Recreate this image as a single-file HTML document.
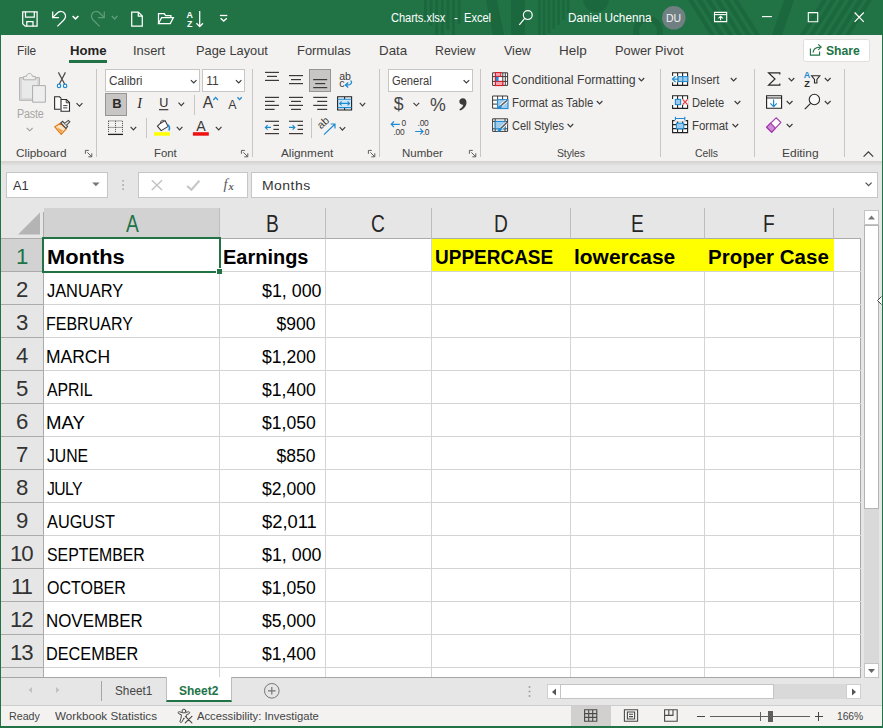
<!DOCTYPE html>
<html lang="en">
<head>
<meta charset="utf-8">
<title>Charts.xlsx - Excel</title>
<style>
html,body{margin:0;padding:0;background:#e6e6e6;}
body{width:883px;height:728px;overflow:hidden;font-family:"Liberation Sans",sans-serif;}
#app{position:relative;width:883px;height:728px;overflow:hidden;background:#e6e6e6;}
.a{position:absolute;box-sizing:border-box;}
.t{position:absolute;white-space:pre;transform-origin:0 50%;line-height:24px;height:24px;font-family:"Liberation Sans",sans-serif;}
svg{position:absolute;overflow:visible;}
.sep{position:absolute;width:1px;background:#c8c6c4;}
.box{position:absolute;box-sizing:border-box;background:#fff;border:1px solid #c8c6c4;}
.gv{position:absolute;width:1px;background:#d4d4d4;top:239px;height:438px;}
.gh{position:absolute;height:1px;background:#d4d4d4;left:44px;width:817px;}
.hv{position:absolute;width:1px;background:#bdbdbd;top:208px;height:31px;}
.rh{position:absolute;height:1px;background:#ababab;left:1px;width:42px;}
</style>
</head>
<body>
<div id="app">
<!-- title bar -->
<div class="a" style="left:0;top:0;width:883px;height:35px;background:#217346;"></div>
<svg style="left:0;top:0;" width="883" height="35" viewBox="0 0 883 35"><g fill="#1c683e"><rect x="424" y="0" width="3" height="20"/><rect x="429.6" y="0" width="3" height="26"/><rect x="435.20000000000005" y="0" width="3" height="35"/><rect x="440.80000000000007" y="0" width="3" height="35"/><rect x="446.4000000000001" y="0" width="3" height="30"/><rect x="452.0000000000001" y="0" width="3" height="35"/><rect x="457.60000000000014" y="0" width="3" height="24"/><path d="M486 0H497L504 35H493Z"/><rect x="511" y="0" width="14" height="35"/><rect x="538.0" y="0" width="2.6" height="35"/><rect x="542.8" y="0" width="2.6" height="35"/><rect x="547.6" y="0" width="2.6" height="33"/><rect x="552.4" y="0" width="2.6" height="29"/><rect x="557.2" y="0" width="2.6" height="25"/><rect x="562.0" y="0" width="2.6" height="20"/><rect x="566.8" y="0" width="2.6" height="14"/><circle cx="596" cy="-1" r="13"/><circle cx="648" cy="31" r="12" fill="none" stroke="#1c683e" stroke-width="6"/><path d="M688 0H693L715 35H710Z"/><path d="M697 0H702L724 35H719Z"/><path d="M706 0H711L733 35H728Z"/><path d="M715 0H720L742 35H737Z"/><path d="M724 0H729L751 35H746Z"/><path d="M733 0H738L760 35H755Z"/><path d="M784 0H794L782 35H772Z"/><path d="M822 0H827L805 35H800Z"/><path d="M831 0H836L814 35H809Z"/><path d="M840 0H845L823 35H818Z"/><path d="M849 0H854L832 35H827Z"/><path d="M858 0H863L841 35H836Z"/><path d="M867 0H872L850 35H845Z"/></g></svg>
<!-- ribbon -->
<div class="a" style="left:0;top:35px;width:883px;height:126px;background:#f3f2f1;"></div>
<div class="a" style="left:0;top:161px;width:883px;height:5px;background:linear-gradient(#d2d1d0,#e6e6e6);"></div>
<!-- home underline -->
<div class="a" style="left:69px;top:60px;width:38px;height:3px;background:#217346;"></div>
<!-- share button -->
<div class="a" style="left:803px;top:38.5px;width:66.5px;height:23px;background:#fff;border:1px solid #e1dfdd;border-radius:2.5px;"></div>
<!-- ribbon group separators -->
<div class="sep" style="left:96px;top:69px;height:88px;"></div>
<div class="sep" style="left:252px;top:69px;height:88px;"></div>
<div class="sep" style="left:379px;top:69px;height:88px;"></div>
<div class="sep" style="left:480px;top:69px;height:88px;"></div>
<div class="sep" style="left:660px;top:69px;height:88px;"></div>
<div class="sep" style="left:754px;top:69px;height:88px;"></div>
<div class="sep" style="left:844px;top:69px;height:88px;"></div>
<!-- small separators -->
<div class="sep" style="left:194px;top:95px;height:20px;"></div>
<div class="sep" style="left:146px;top:118px;height:20px;"></div>
<div class="sep" style="left:311px;top:118px;height:20px;"></div>
<!-- combo boxes -->
<div class="box" style="left:105px;top:69px;width:95px;height:23px;"></div>
<div class="box" style="left:202px;top:69px;width:43px;height:23px;"></div>
<div class="box" style="left:388px;top:69px;width:85px;height:23px;"></div>
<!-- pressed buttons -->
<div class="a" style="left:105px;top:93px;width:22px;height:23px;background:#c8c6c4;border:1px solid #979593;"></div>
<div class="a" style="left:309px;top:69px;width:22px;height:23px;background:#c8c6c4;border:1px solid #979593;"></div>

<!-- formula bar -->
<div class="box" style="left:6px;top:172px;width:102px;height:26px;border-color:#c6c6c6;"></div>
<div class="box" style="left:138px;top:172px;width:110px;height:26px;border-color:#c6c6c6;"></div>
<div class="box" style="left:251px;top:172px;width:627px;height:26px;border-color:#c6c6c6;"></div>

<!-- grid -->
<div class="a" style="left:1px;top:208px;width:860px;height:31px;background:#e6e6e6;"></div>
<div class="a" style="left:44px;top:239px;width:817px;height:438px;background:#fff;"></div>
<div class="a" style="left:1px;top:239px;width:42px;height:438px;background:#e6e6e6;"></div>
<!-- selected headers -->
<div class="a" style="left:44px;top:208px;width:176px;height:30px;background:#d2d2d2;"></div>
<div class="a" style="left:1px;top:239px;width:42px;height:32px;background:#d2d2d2;"></div>
<!-- yellow cells -->
<div class="a" style="left:432px;top:239px;width:402px;height:32px;background:#ffff00;"></div>
<!-- header borders -->
<div class="a" style="left:1px;top:238px;width:860px;height:1px;background:#ababab;"></div>
<div class="a" style="left:43px;top:212px;width:1px;height:465px;background:#ababab;"></div>
<div class="a" style="left:860px;top:238px;width:1px;height:440px;background:#a6a6a6;"></div>
<div class="hv" style="left:219px;"></div><div class="hv" style="left:325px;"></div><div class="hv" style="left:431px;"></div>
<div class="hv" style="left:570px;"></div><div class="hv" style="left:704px;"></div><div class="hv" style="left:833px;"></div>
<div class="gv" style="left:219px;"></div><div class="gv" style="left:325px;"></div><div class="gv" style="left:431px;"></div>
<div class="gv" style="left:570px;"></div><div class="gv" style="left:704px;"></div><div class="gv" style="left:833px;"></div>
<div class="gh" style="top:271px;"></div><div class="rh" style="top:271px;"></div>
<div class="gh" style="top:304px;"></div><div class="rh" style="top:304px;"></div>
<div class="gh" style="top:337px;"></div><div class="rh" style="top:337px;"></div>
<div class="gh" style="top:370px;"></div><div class="rh" style="top:370px;"></div>
<div class="gh" style="top:403px;"></div><div class="rh" style="top:403px;"></div>
<div class="gh" style="top:436px;"></div><div class="rh" style="top:436px;"></div>
<div class="gh" style="top:469px;"></div><div class="rh" style="top:469px;"></div>
<div class="gh" style="top:502px;"></div><div class="rh" style="top:502px;"></div>
<div class="gh" style="top:535px;"></div><div class="rh" style="top:535px;"></div>
<div class="gh" style="top:568px;"></div><div class="rh" style="top:568px;"></div>
<div class="gh" style="top:601px;"></div><div class="rh" style="top:601px;"></div>
<div class="gh" style="top:634px;"></div><div class="rh" style="top:634px;"></div>
<div class="gh" style="top:667px;"></div><div class="rh" style="top:667px;"></div>
<!-- yellow covers inner vertical gridlines in row 1 -->
<div class="a" style="left:432px;top:239px;width:402px;height:32px;background:#ffff00;"></div>
<!-- select-all triangle -->
<svg style="left:17px;top:212px;" width="24" height="23" viewBox="0 0 24 23"><path d="M23 0.5V22.5H1Z" fill="#b4b4b4"/></svg>
<!-- selection -->
<div class="a" style="left:42px;top:237px;width:179px;height:36px;border:2px solid #217346;"></div>
<div class="a" style="left:216px;top:268px;width:6px;height:6px;background:#217346;border:1px solid #fff;border-right:0;border-bottom:0;"></div>

<!-- vertical scrollbar -->
<div class="a" style="left:864px;top:210px;width:15px;height:15px;background:#fff;border:1px solid #c4c4c4;"></div>
<div class="a" style="left:864px;top:225px;width:15px;height:438px;background:#d9d9d9;"></div>
<div class="a" style="left:864px;top:225px;width:15px;height:284px;background:#fff;border:1px solid #b4b4b4;"></div>
<div class="a" style="left:864px;top:663px;width:15px;height:15px;background:#fff;border:1px solid #c4c4c4;"></div>
<svg style="left:864px;top:210px;" width="15" height="15" viewBox="0 0 15 15"><path d="M4 9.5L7.5 5.5L11 9.5Z" fill="#777"/></svg>
<svg style="left:864px;top:663px;" width="15" height="14" viewBox="0 0 15 14"><path d="M4 6L7.5 10L11 6Z" fill="#666"/></svg>

<!-- sheet tab bar -->
<div class="a" style="left:1px;top:677px;width:860px;height:1px;background:#a6a6a6;"></div>
<div class="a" style="left:101px;top:681px;width:1px;height:20px;background:#a6a6a6;"></div>
<div class="a" style="left:166px;top:677px;width:66px;height:25px;background:#fff;border-left:1px solid #bdbdbd;border-right:1px solid #bdbdbd;border-bottom:2px solid #217346;"></div>
<svg style="left:24px;top:684px;" width="40" height="12" viewBox="0 0 40 12"><path d="M8 3L4.5 6L8 9Z" fill="#c2c2c2"/><path d="M32 3L35.5 6L32 9Z" fill="#c2c2c2"/></svg>
<svg style="left:262px;top:681px;" width="20" height="20" viewBox="0 0 20 20"><circle cx="9.8" cy="9.8" r="7.3" fill="none" stroke="#767676" stroke-width="1"/><path d="M9.8 6V13.6M6 9.8H13.6" stroke="#767676" stroke-width="1.2" fill="none"/></svg>
<!-- horizontal scrollbar -->
<svg style="left:527px;top:685px;" width="6" height="14" viewBox="0 0 6 14"><circle cx="2.5" cy="2" r="1" fill="#a0a0a0"/><circle cx="2.5" cy="6.5" r="1" fill="#a0a0a0"/><circle cx="2.5" cy="11" r="1" fill="#a0a0a0"/></svg>
<div class="a" style="left:547px;top:684px;width:314px;height:15px;background:#d9d9d9;"></div>
<div class="a" style="left:547px;top:684px;width:14px;height:15px;background:#fff;border:1px solid #cfcfcf;"></div>
<div class="a" style="left:560px;top:684px;width:214px;height:15px;background:#fff;border:1px solid #c4c4c4;"></div>
<div class="a" style="left:846px;top:684px;width:15px;height:15px;background:#fff;border:1px solid #cfcfcf;"></div>
<svg style="left:547px;top:684.5px;" width="14" height="14" viewBox="0 0 14 14"><path d="M9 3.5L5 7L9 10.5Z" fill="#555"/></svg>
<svg style="left:846.5px;top:684.5px;" width="14" height="14" viewBox="0 0 14 14"><path d="M5 3.5L9 7L5 10.5Z" fill="#555"/></svg>

<!-- status bar -->
<div class="a" style="left:0;top:705px;width:883px;height:23px;background:#f3f2f1;border-top:1px solid #cdcdcd;"></div>
<div class="a" style="left:571px;top:706px;width:40px;height:21px;background:#d2d0ce;"></div>
<!-- zoom slider -->
<div class="a" style="left:710px;top:716px;width:100px;height:1px;background:#605e5c;"></div>
<div class="a" style="left:760px;top:712px;width:1px;height:9px;background:#605e5c;"></div>
<div class="a" style="left:768px;top:711px;width:5px;height:11px;background:#605e5c;"></div>
<div class="a" style="left:697px;top:716px;width:8px;height:1px;background:#444;"></div>
<div class="a" style="left:815px;top:716px;width:8px;height:1px;background:#444;"></div>
<div class="a" style="left:818px;top:712px;width:1px;height:9px;background:#444;"></div>

<!-- window border -->
<div class="a" style="left:0;top:35px;width:1px;height:693px;background:#217346;"></div>
<div class="a" style="left:881.6px;top:35px;width:1.4px;height:693px;background:#217346;"></div>
<div class="a" style="left:0;top:726px;width:883px;height:2px;background:#217346;"></div>
<svg style="left:0;top:0;" width="883" height="728" viewBox="0 0 883 728" font-family="Liberation Sans, sans-serif">
<g fill="none" stroke="#fff" stroke-width="1.25" stroke-linejoin="miter">
<path d="M22.7 11.8H37.1V26.2H25.2L22.7 23.7Z"/>
<path d="M25.5 11.8V17.1H34.3V11.8"/>
<path d="M26.8 26.2V21.5H33V26.2"/>
<path d="M52.7 11.4V17.6H58.9"/>
<path d="M52.9 17.4L57 13.2C59.5 10.8 63 11 64.6 13.4C66.2 15.8 65.6 18.2 63.6 20.2L57.4 26.4"/>
</g>
<path d="M72.6 16.0L75.5 18.9L78.4 16.0" fill="none" stroke="#fff" stroke-width="1.5"/>
<g fill="none" stroke="#5f9c7c" stroke-width="1.25">
<path d="M104.3 11.4V17.6H98.1"/>
<path d="M104.1 17.4L100 13.2C97.5 10.8 94 11 92.4 13.4C90.8 15.8 91.4 18.2 93.4 20.2L99.6 26.4"/>
</g>
<path d="M111.8 16.0L114.6 18.9L117.4 16.0" fill="none" stroke="#5f9c7c" stroke-width="1.5"/>
<g fill="none" stroke="#fff" stroke-width="1.25">
<path d="M131.7 12H138.3L142.3 16V26.2H131.7Z"/><path d="M138.3 12V16H142.3"/>
<path d="M158.5 23.5V13.7H164.3L165.6 15.6H170.9V17.6"/>
<path d="M158.5 23.5L161.6 17.6H173.4L170.3 23.5Z"/>
<path d="M199.7 10.9V26.4M196.4 23.2L199.7 26.5L203 23.2"/>
</g>
<text x="186.4" y="17.6" font-size="8.8" font-weight="bold" fill="#fff">A</text>
<text x="186.9" y="26.9" font-size="8.8" font-weight="bold" fill="#fff">Z</text>
<path d="M219.9 15.5H227.3" stroke="#fff" stroke-width="1.3" fill="none"/>
<path d="M220.6 18.2L223.7 21.1L226.8 18.2" fill="none" stroke="#fff" stroke-width="1.4"/>
<circle cx="527.8" cy="15.1" r="4.4" fill="none" stroke="#fff" stroke-width="1.2"/><path d="M524.7 18.4L519.3 24.8" stroke="#fff" stroke-width="1.2"/>
<circle cx="673.8" cy="17.8" r="11.8" fill="#6f7f82"/>
<g fill="none" stroke="#fff" stroke-width="1.1"><path d="M714.5 12.4H726.7V21.6H714.5Z"/><path d="M714.5 14.6H726.7"/><path d="M720.6 20.3V16.4M718.4 18.4L720.6 16.2L722.8 18.4"/></g>
<path d="M762.1 16.6H771.9" stroke="#fff" stroke-width="1.1" fill="none"/>
<path d="M808.3 12.6H817.7V21.8H808.3Z" fill="none" stroke="#fff" stroke-width="1.1"/>
<path d="M854.6 12.5L863.8 21.8M863.8 12.5L854.6 21.8" fill="none" stroke="#fff" stroke-width="1.2"/>
<g fill="none" stroke="#217346" stroke-width="1.1"><path d="M810.4 48.6V55.1H819.6V51.6"/><path d="M813 52.6C813.3 49.2 815.6 47.2 820.6 47.1"/><path d="M818.2 44.4L821.2 47.1L818.2 49.9"/></g>
<path d="M863.6 156.6L868.4 151.8L873.2 156.6" fill="none" stroke="#3b3a39" stroke-width="1.2"/>
<path d="M19.6 77.6H39.4V100.3H19.6Z" fill="#d9d9d9" stroke="#b2b2b2" stroke-width="1"/>
<path d="M22 80H37V98H22Z" fill="#e9e9e9"/>
<path d="M23.6 79.8V76.4H26.5C26.5 72.4 32.4 72.4 32.4 76.4H35.3V79.8Z" fill="#efefef" stroke="#b2b2b2" stroke-width="1"/>
<path d="M32.6 85.6H45.4V102.2H32.6Z" fill="#eeeeee" stroke="#adadad" stroke-width="1"/>
<path d="M26.8 128.0L29.7 130.8L32.6 128.0" fill="none" stroke="#a19f9d" stroke-width="1.1"/>
<path d="M58.4 72.4L64.6 84M65.4 72.4L59.4 84" stroke="#4a4a4a" stroke-width="1.2" fill="none"/>
<circle cx="59" cy="85.9" r="1.7" fill="#fff" stroke="#1e8ad2" stroke-width="1.2"/><circle cx="65.1" cy="85.9" r="1.7" fill="#fff" stroke="#1e8ad2" stroke-width="1.2"/>
<path d="M60.2 109.2H54.6V96.8H59.6L61.4 98.6" fill="#fafafa" stroke="#2b2b2b" stroke-width="1.1"/>
<path d="M61 99.5H66.4L69.5 102.6V111.2H61Z" fill="#fff" stroke="#2b2b2b" stroke-width="1.1"/>
<path d="M66.2 99.8V102.8H69.3M63.2 105.6H67.4M63.2 107.9H67.4" fill="none" stroke="#2b2b2b" stroke-width="0.9"/>
<path d="M76.5 103.2L79.5 106.1L82.4 103.2" fill="none" stroke="#3b3a39" stroke-width="1.15"/>
<path d="M54.8 126.8L60.4 123.2L66.2 128.8L61.2 134.4Z" fill="#fbe3c6" stroke="#e17a12" stroke-width="1.2" stroke-linejoin="round"/>
<path d="M56.5 127.2L61.2 133L63 130.5Z" fill="#f0a040"/>
<path d="M60.8 123L62.6 121.3L67.6 126.6L66 128.4Z" fill="#f3f2f1" stroke="#4a4a4a" stroke-width="1.1"/>
<path d="M64.6 123.4L68.4 120.4L69.8 121.8L66.4 125.4" fill="#f3f2f1" stroke="#4a4a4a" stroke-width="1.1"/>
<path d="M85.4 153.8V150.4H88.8" fill="none" stroke="#605e5c" stroke-width="1"/>
<path d="M87.4 152.4L91.6 156.6M91.8 153.3V156.8H88.3" fill="none" stroke="#605e5c" stroke-width="1"/>
<path d="M190.9 80.1L193.7 83.0L196.5 80.1" fill="none" stroke="#3b3a39" stroke-width="1.15"/>
<path d="M235.9 80.1L238.7 83.0L241.4 80.1" fill="none" stroke="#3b3a39" stroke-width="1.15"/>
<text x="112.2" y="107.7" font-size="13" font-weight="bold" fill="#2b2a29">B</text>
<text x="137.2" y="107.7" font-size="14.2" font-style="italic" font-family="Liberation Serif, serif" fill="#2b2a29">I</text>
<text x="159.2" y="107.4" font-size="12.6" fill="#2b2a29">U</text>
<path d="M159.0 109.7H168.3" stroke="#2b2a29" stroke-width="1.1" fill="none"/>
<path d="M178.5 102.7L181.3 105.7L184.1 102.7" fill="none" stroke="#3b3a39" stroke-width="1.15"/>
<text x="202.8" y="108.1" font-size="15.6" fill="#3b3a39">A</text>
<path d="M213.3 100L215.6 97.4L217.9 100" fill="none" stroke="#1e8ad2" stroke-width="1.3"/>
<text x="228.2" y="108.5" font-size="12.4" fill="#3b3a39">A</text>
<path d="M237.5 97.2L239.6 99.6L241.7 97.2" fill="none" stroke="#1e8ad2" stroke-width="1.3"/>
<g stroke="#4a4a4a" stroke-width="1" stroke-dasharray="1 1" fill="none"><path d="M108.5 120.9H122.5M108.5 120.9V133M122.5 120.9V133M115.5 120.9V133M108.5 127.4H122.5"/></g>
<path d="M108.0 134.4H123.0" stroke="#1f1f1f" stroke-width="1.3" fill="none"/>
<path d="M130.6 126.9L133.4 129.9L136.2 126.9" fill="none" stroke="#3b3a39" stroke-width="1.15"/>
<path d="M160.6 123.2L165 120.6L168.2 126.4L161.2 130.6L157.4 126.2Z" fill="#fff" stroke="#3b3a39" stroke-width="1.1" stroke-linejoin="round"/>
<path d="M160.6 123.4C160 120.8 163 119.4 164.4 121" fill="none" stroke="#3b3a39" stroke-width="1"/>
<path d="M167.6 124.6C169.4 125.6 169.8 128 169 130.4" fill="none" stroke="#1e8ad2" stroke-width="1.6"/>
<rect x="154" y="132.2" width="16" height="3.5" fill="#ffff00"/>
<path d="M176.8 126.9L179.6 129.9L182.4 126.9" fill="none" stroke="#3b3a39" stroke-width="1.15"/>
<text x="196.3" y="130.6" font-size="14.2" fill="#3b3a39">A</text>
<rect x="192.9" y="132.2" width="15.9" height="3.5" fill="#ee1111"/>
<path d="M215.8 126.9L218.7 129.9L221.5 126.9" fill="none" stroke="#3b3a39" stroke-width="1.15"/>
<path d="M241.4 153.8V150.4H244.8" fill="none" stroke="#605e5c" stroke-width="1"/>
<path d="M243.4 152.4L247.6 156.6M247.8 153.3V156.8H244.3" fill="none" stroke="#605e5c" stroke-width="1"/>
<path d="M265.0 72.4H279.0" stroke="#3b3a39" stroke-width="1.2" fill="none"/>
<path d="M267.0 76.4H277.0" stroke="#3b3a39" stroke-width="1.2" fill="none"/>
<path d="M265.0 80.4H279.0" stroke="#3b3a39" stroke-width="1.2" fill="none"/>
<path d="M289.0 75.6H303.0" stroke="#3b3a39" stroke-width="1.2" fill="none"/>
<path d="M291.0 79.6H301.0" stroke="#3b3a39" stroke-width="1.2" fill="none"/>
<path d="M289.0 83.6H303.0" stroke="#3b3a39" stroke-width="1.2" fill="none"/>
<path d="M313.2 79.6H327.2" stroke="#3b3a39" stroke-width="1.2" fill="none"/>
<path d="M315.2 83.6H325.2" stroke="#3b3a39" stroke-width="1.2" fill="none"/>
<path d="M313.2 87.6H327.2" stroke="#3b3a39" stroke-width="1.2" fill="none"/>
<text x="339.2" y="80" font-size="10.6" fill="#3b3a39">ab</text><text x="339.2" y="86.7" font-size="10.6" fill="#3b3a39">c</text>
<path d="M350.6 80.6C352.6 82.4 351.6 85.2 346 85" fill="none" stroke="#1e8ad2" stroke-width="1.3"/><path d="M348.2 82.6L345.4 85L348.2 87.4" fill="none" stroke="#1e8ad2" stroke-width="1.3"/>
<path d="M265.0 97.4H279.0" stroke="#3b3a39" stroke-width="1.2" fill="none"/>
<path d="M265.0 101.4H274.6" stroke="#3b3a39" stroke-width="1.2" fill="none"/>
<path d="M265.0 105.4H279.0" stroke="#3b3a39" stroke-width="1.2" fill="none"/>
<path d="M265.0 109.4H274.6" stroke="#3b3a39" stroke-width="1.2" fill="none"/>
<path d="M289.0 97.4H303.0" stroke="#3b3a39" stroke-width="1.2" fill="none"/>
<path d="M291.0 101.4H301.0" stroke="#3b3a39" stroke-width="1.2" fill="none"/>
<path d="M289.0 105.4H303.0" stroke="#3b3a39" stroke-width="1.2" fill="none"/>
<path d="M291.0 109.4H301.0" stroke="#3b3a39" stroke-width="1.2" fill="none"/>
<path d="M313.2 97.4H327.2" stroke="#3b3a39" stroke-width="1.2" fill="none"/>
<path d="M317.2 101.4H327.2" stroke="#3b3a39" stroke-width="1.2" fill="none"/>
<path d="M313.2 105.4H327.2" stroke="#3b3a39" stroke-width="1.2" fill="none"/>
<path d="M317.2 109.4H327.2" stroke="#3b3a39" stroke-width="1.2" fill="none"/>
<rect x="337.6" y="99.2" width="14" height="8.4" fill="#cfe6f7"/>
<path d="M337.6 96.8H351.6V110H337.6Z M344.6 96.8V99.2M344.6 107.6V110" fill="none" stroke="#1f1f1f" stroke-width="1.1"/>
<path d="M337.6 99.2H351.6M337.6 107.6H351.6" stroke="#1e8ad2" stroke-width="1.1" fill="none"/>
<path d="M339.6 103.4H349.6M341.6 101.4L339.6 103.4L341.6 105.4M347.6 101.4L349.6 103.4L347.6 105.4" stroke="#1e8ad2" stroke-width="1.1" fill="none"/>
<path d="M359.8 102.9L362.5 105.8L365.2 102.9" fill="none" stroke="#3b3a39" stroke-width="1.15"/>
<path d="M265.0 121.3H279.0" stroke="#3b3a39" stroke-width="1.2" fill="none"/>
<path d="M273.4 125.4H279.0" stroke="#3b3a39" stroke-width="1.2" fill="none"/>
<path d="M273.4 129.4H279.0" stroke="#3b3a39" stroke-width="1.2" fill="none"/>
<path d="M265.0 133.6H279.0" stroke="#3b3a39" stroke-width="1.2" fill="none"/>
<path d="M265.4 127.4H271M267.6 125.2L265.4 127.4L267.6 129.6" fill="none" stroke="#1e8ad2" stroke-width="1.2"/>
<path d="M289.0 121.3H303.0" stroke="#3b3a39" stroke-width="1.2" fill="none"/>
<path d="M297.6 125.4H303.0" stroke="#3b3a39" stroke-width="1.2" fill="none"/>
<path d="M297.6 129.4H303.0" stroke="#3b3a39" stroke-width="1.2" fill="none"/>
<path d="M289.0 133.6H303.0" stroke="#3b3a39" stroke-width="1.2" fill="none"/>
<path d="M289 127.4H294.8M292.6 125.2L294.8 127.4L292.6 129.6" fill="none" stroke="#1e8ad2" stroke-width="1.2"/>
<text transform="translate(321 129.4) rotate(-42)" font-size="10.8" fill="#3b3a39">ab</text>
<path d="M324 134.6L334.8 124.2M330.6 124H335V128.4" fill="none" stroke="#1e8ad2" stroke-width="1.2"/>
<path d="M339.7 127.2L342.4 130.1L345.2 127.2" fill="none" stroke="#3b3a39" stroke-width="1.15"/>
<path d="M368.4 153.8V150.4H371.8" fill="none" stroke="#605e5c" stroke-width="1"/>
<path d="M370.4 152.4L374.6 156.6M374.8 153.3V156.8H371.3" fill="none" stroke="#605e5c" stroke-width="1"/>
<path d="M463.6 80.1L466.4 83.0L469.2 80.1" fill="none" stroke="#3b3a39" stroke-width="1.15"/>
<text x="393.8" y="109.6" font-size="17.6" fill="#444">$</text>
<path d="M413.5 102.9L416.4 105.8L419.2 102.9" fill="none" stroke="#3b3a39" stroke-width="1.15"/>
<text x="430" y="110.6" font-size="17.8" fill="#444">%</text>
<path d="M462.9 98.2C465.2 98.2 466.5 100 466.5 102.4C466.5 106 464 109 460 110.4L459.4 109.2C461.6 108.2 463 106.6 463.2 104.8C461 105 459.3 103.6 459.3 101.6C459.3 99.6 460.9 98.2 462.9 98.2Z" fill="#3b3a39"/>
<path d="M391.2 124.3H399.8M394 121.4L391.2 124.3L394 127.2" fill="none" stroke="#1e8ad2" stroke-width="1.2"/>
<text x="401.5" y="126.1" font-size="8.4" fill="#3b3a39">0</text><text x="393.4" y="134.6" font-size="8.4" fill="#3b3a39" letter-spacing="-0.25">.00</text>
<text x="417.6" y="126.1" font-size="8.4" fill="#3b3a39" letter-spacing="-0.25">.00</text><text x="422.8" y="134.6" font-size="8.4" fill="#3b3a39" letter-spacing="-0.25">.0</text>
<path d="M415.2 131.5H423M420.2 128.6L423 131.5L420.2 134.4" fill="none" stroke="#1e8ad2" stroke-width="1.2"/>
<path d="M469.4 153.8V150.4H472.8" fill="none" stroke="#605e5c" stroke-width="1"/>
<path d="M471.4 152.4L475.6 156.6M475.8 153.3V156.8H472.3" fill="none" stroke="#605e5c" stroke-width="1"/>
<rect x="492.6" y="72.8" width="15" height="12.6" fill="#fff"/>
<path d="M492.6 72.8H507.6V85.4H492.6ZM495.4 72.8V85.4M502.8 72.8V85.4M505.3 72.8V85.4M492.6 76.6H507.6M492.6 81.4H507.6" fill="none" stroke="#3b3a39" stroke-width="1"/>
<rect x="495.4" y="72.6" width="5.4" height="3.8" fill="#f7a3ac" stroke="#e81123" stroke-width="1"/>
<rect x="495.4" y="81.4" width="7.4" height="4.2" fill="#f7a3ac" stroke="#e81123" stroke-width="1"/>
<rect x="495.2" y="76.8" width="3.4" height="4.4" fill="#2b88d8"/>
<path d="M495.4 76.4V81.4" stroke="#e81123" stroke-width="1"/>
<path d="M638.6 78.0L641.4 80.9L644.2 78.0" fill="none" stroke="#3b3a39" stroke-width="1.15"/>
<rect x="492.6" y="96" width="15" height="12.2" fill="#fff"/>
<path d="M492.6 96H507.6V108.2H492.6ZM497.6 96V108.2M502.6 96V108.2M492.6 100.1H507.6M492.6 104.1H507.6" fill="none" stroke="#3b3a39" stroke-width="1"/>
<rect x="497.6" y="99.6" width="10.4" height="9" fill="#9ccbee" stroke="#1e8ad2" stroke-width="1"/>
<path d="M506.8 100.6L500.4 106.2" stroke="#fff" stroke-width="3"/><path d="M507 100.4L500.6 106" stroke="#605e5c" stroke-width="1.5"/>
<path d="M500.8 105.2C499.4 105 498.4 106 498.2 107.4C497.8 108.4 496.8 108.6 496 108.6C498.4 109.6 501.4 109.2 501.8 106.4Z" fill="#1e8ad2"/>
<path d="M596.8 101.0L599.6 103.9L602.4 101.0" fill="none" stroke="#3b3a39" stroke-width="1.15"/>
<rect x="492.6" y="118.8" width="15" height="12.6" fill="#fff"/>
<path d="M492.6 118.8H507.6V131.4H492.6ZM492.6 121.4H507.6M495.2 118.8V131.4M492.6 128.8H507.6M505 118.8V131.4" fill="none" stroke="#3b3a39" stroke-width="1"/>
<rect x="495.2" y="121.4" width="9.8" height="7.4" fill="#9ccbee" stroke="#1e8ad2" stroke-width="1"/>
<path d="M506.8 122.6L500.4 128.8" stroke="#fff" stroke-width="3"/><path d="M507 122.4L500.6 128.6" stroke="#605e5c" stroke-width="1.5"/>
<path d="M500.8 127.8C499.4 127.6 498.4 128.6 498.2 130C497.8 131 496.8 131.2 496 131.2C498.4 132.2 501.4 131.8 501.8 129Z" fill="#1e8ad2"/>
<path d="M567.6 124.0L570.4 126.9L573.2 124.0" fill="none" stroke="#3b3a39" stroke-width="1.15"/>
<rect x="672.6" y="72.8" width="15" height="12.6" fill="#fff"/>
<path d="M672.6 72.8H687.6V85.4H672.6ZM677.6 72.8V85.4M682.6 72.8V85.4M672.6 77.0H687.6M672.6 81.2H687.6" fill="none" stroke="#1f1f1f" stroke-width="1.1"/>
<rect x="671.4" y="75.8" width="6.2" height="6.6" fill="#f3f2f1"/>
<rect x="678.2" y="76.6" width="9.6" height="5" fill="#9ccbee" stroke="#1e8ad2" stroke-width="1"/>
<path d="M682.8 76.6V81.6" stroke="#1e8ad2" stroke-width="1"/>
<path d="M672.6 79.1H678.2M675.6 76.1L672.5 79.1L675.6 82.1" fill="none" stroke="#1e8ad2" stroke-width="1.25"/>
<path d="M730.8 78.0L733.6 80.9L736.5 78.0" fill="none" stroke="#3b3a39" stroke-width="1.15"/>
<rect x="672.6" y="95.8" width="15" height="12.6" fill="#fff"/>
<path d="M672.6 95.8H687.6V108.4H672.6ZM677.6 95.8V108.4M682.6 95.8V108.4M672.6 100.0H687.6M672.6 104.2H687.6" fill="none" stroke="#1f1f1f" stroke-width="1.1"/>
<rect x="672" y="99" width="16.4" height="6" fill="#f3f2f1"/>
<rect x="675.4" y="99.4" width="5.2" height="5.2" fill="#9ccbee" stroke="#1e8ad2" stroke-width="1.1"/>
<path d="M682.6 99.4L687.6 104.6M687.6 99.4L682.6 104.6" stroke="#e8383d" stroke-width="1.2" fill="none"/>
<path d="M734.6 101.0L737.5 103.9L740.3 101.0" fill="none" stroke="#3b3a39" stroke-width="1.15"/>
<rect x="672.6" y="120.6" width="15" height="12" fill="#fff"/>
<path d="M672.6 120.6H687.6V132.6H672.6ZM677.6 120.6V132.6M682.6 120.6V132.6M672.6 124.6H687.6M672.6 128.6H687.6" fill="none" stroke="#1f1f1f" stroke-width="1.1"/>
<rect x="674.6" y="116.5" width="11" height="5" fill="#f3f2f1"/>
<path d="M675.4 118.5H684.8M675.4 116.8V120.2M684.8 116.8V120.2" stroke="#1e8ad2" stroke-width="1.1" fill="none"/>
<rect x="676.4" y="123.2" width="7.4" height="5.6" fill="#9ccbee" stroke="#1e8ad2" stroke-width="1.1"/>
<path d="M732.5 124.0L735.4 126.9L738.2 124.0" fill="none" stroke="#3b3a39" stroke-width="1.15"/>
<path d="M779.8 74.6V72.9H768.6L775 79L768.6 85.1H779.8V83.4" fill="none" stroke="#2b2a29" stroke-width="1.2"/>
<path d="M788.6 78.0L791.5 80.9L794.3 78.0" fill="none" stroke="#3b3a39" stroke-width="1.15"/>
<text x="803.8" y="77.6" font-size="9" font-weight="bold" fill="#1e8ad2">A</text>
<text x="804.2" y="86.8" font-size="9.2" fill="#2b2a29" font-weight="bold">Z</text>
<path d="M811.6 75.8H819.8L816.9 79.4V83H814.5V79.4Z" fill="none" stroke="#2b2a29" stroke-width="1.1"/>
<path d="M824.8 78.0L827.7 80.9L830.6 78.0" fill="none" stroke="#3b3a39" stroke-width="1.15"/>
<path d="M766.6 95.8H781.6V108.2H766.6ZM766.6 98H781.6" fill="#fff" stroke="#1f1f1f" stroke-width="1.1"/>
<path d="M773.6 99.4V106.4M770.4 103.4L773.6 106.6L776.8 103.4" fill="none" stroke="#1e8ad2" stroke-width="1.2"/>
<path d="M786.7 101.0L789.6 103.9L792.5 101.0" fill="none" stroke="#3b3a39" stroke-width="1.15"/>
<circle cx="814.4" cy="99.5" r="5.2" fill="#fafafa" stroke="#2b2a29" stroke-width="1.1"/><path d="M810.6 103.3L804.8 109.2" stroke="#2b2a29" stroke-width="1.2"/>
<path d="M824.8 101.0L827.7 103.9L830.6 101.0" fill="none" stroke="#3b3a39" stroke-width="1.15"/>
<path d="M776.1 117.8L780.9 122.4L771.8 132.2L766.7 127.2Z" fill="#fff" stroke="#a43aae" stroke-width="1.2" stroke-linejoin="round"/>
<path d="M770.6 123.2L766.7 127.2L771.8 132.2L775.4 128.2Z" fill="#d28bd8" stroke="#a43aae" stroke-width="1.2" stroke-linejoin="round"/>
<path d="M786.7 124.0L789.6 126.9L792.5 124.0" fill="none" stroke="#3b3a39" stroke-width="1.15"/>
<path d="M193 180.8L194.6 183.2H191.4Z" fill="none"/>
<path d="M92.2 182.4H99.6L95.9 186.2Z" fill="#777"/>
<circle cx="123.1" cy="180.8" r="0.9" fill="#a6a6a6"/>
<circle cx="123.1" cy="185" r="0.9" fill="#a6a6a6"/>
<circle cx="123.1" cy="189.2" r="0.9" fill="#a6a6a6"/>
<path d="M151.8 180.3L162 190M162 180.3L151.8 190" stroke="#c3c3c3" stroke-width="1.5" fill="none"/>
<path d="M187.2 186L191.4 189.8L199.4 180.6" stroke="#c6c6c6" stroke-width="2.2" fill="none"/>
<text x="223.4" y="189.4" font-size="14.5" font-style="italic" font-family="Liberation Serif, serif" fill="#5c5c5c">f</text>
<text x="228.6" y="189.6" font-size="10.5" font-style="italic" font-family="Liberation Serif, serif" fill="#5c5c5c" font-weight="bold">x</text>
<path d="M865.6 182.6L868.6 185.6L871.6 182.6" fill="none" stroke="#555" stroke-width="1.3"/>
<g fill="none" stroke="#454545" stroke-width="1" stroke-linejoin="round" stroke-linecap="round">
<circle cx="183.9" cy="711.1" r="1.9"/>
<path d="M182 712.7C180.6 712 179.4 711.6 178.7 711.8C177.8 712.2 178 713.4 179 713.8L181.4 714.8C181.4 717.4 180.6 719.6 180 721.2C179.6 722.4 181.4 723 182 721.8L183.7 718.6"/>
<path d="M185.8 712.7C187.2 712 188.4 711.6 189.1 711.8C190 712.2 189.8 713.4 188.8 713.8L186.4 714.8C186.4 715.4 186.4 716 186.5 716.4"/>
<path d="M185.3 716.3L191.9 722.8M191.9 716.3L185.3 722.8" stroke-width="1.1"/>
</g>
<circle cx="183.9" cy="718.4" r="0.7" fill="#454545"/>
<g fill="none" stroke="#4a4a4a" stroke-width="1.1">
<path d="M584.6 709.8H596.8V721.2H584.6ZM588.7 709.8V721.2M592.7 709.8V721.2M584.6 713.6H596.8M584.6 717.4H596.8"/>
<path d="M624.4 709.8H637.6V721.2H624.4ZM627.4 712H634.6V719H627.4ZM629 714.2H633M629 716.6H633"/>
<path d="M664.6 709.8H677.2V721.2H664.6ZM668.8 709.8V715.4H664.6M673 709.8V715.4H668.8"/>
</g>
<path d="M881.5 296.5L877.5 300.5L881.5 304.5" fill="#fff" stroke="#333" stroke-width="0.9"/>
</svg>

<!-- text -->
<span class="t" style="left:390.80px;top:5.93px;font-size:12.3px;letter-spacing:-0.044px;transform:scaleX(0.9000);color:#fff;">Charts.xlsx</span>
<span class="t" style="left:453.60px;top:5.93px;font-size:12.3px;transform:scaleX(0.9500);color:#fff;">-</span>
<span class="t" style="left:463.70px;top:5.93px;font-size:12.3px;transform:scaleX(0.9000);color:#fff;">Excel</span>
<span class="t" style="left:567.85px;top:6.23px;font-size:12.3px;transform:scaleX(0.9543);color:#fff;">Daniel Uchenna</span>
<span class="t" style="left:666.30px;top:6.27px;font-size:11.3px;transform:scaleX(0.9283);color:#f3f3f3;">DU</span>
<span class="t" style="left:17.26px;top:38.84px;font-size:12.6px;transform:scaleX(0.9436);color:#3d3c3b;">File</span>
<span class="t" style="left:69.70px;top:38.90px;font-size:12.4px;transform:scaleX(1.0627);color:#252423;font-weight:bold;">Home</span>
<span class="t" style="left:133.18px;top:38.84px;font-size:12.6px;transform:scaleX(1.0194);color:#3d3c3b;">Insert</span>
<span class="t" style="left:195.98px;top:38.84px;font-size:12.6px;transform:scaleX(1.0167);color:#3d3c3b;">Page Layout</span>
<span class="t" style="left:297.47px;top:38.84px;font-size:12.6px;transform:scaleX(1.0256);color:#3d3c3b;">Formulas</span>
<span class="t" style="left:379.24px;top:38.84px;font-size:12.6px;transform:scaleX(1.0587);color:#3d3c3b;">Data</span>
<span class="t" style="left:434.82px;top:38.84px;font-size:12.6px;transform:scaleX(0.9782);color:#3d3c3b;">Review</span>
<span class="t" style="left:504.00px;top:38.84px;font-size:12.6px;transform:scaleX(0.9938);color:#3d3c3b;">View</span>
<span class="t" style="left:558.53px;top:38.84px;font-size:12.6px;transform:scaleX(1.0724);color:#3d3c3b;">Help</span>
<span class="t" style="left:614.98px;top:38.84px;font-size:12.6px;transform:scaleX(1.0196);color:#3d3c3b;">Power Pivot</span>
<span class="t" style="left:826.20px;top:38.87px;font-size:12.5px;transform:scaleX(0.9744);color:#217346;font-weight:bold;">Share</span>
<span class="t" style="left:17.00px;top:101.93px;font-size:12px;letter-spacing:-0.253px;transform:scaleX(0.9000);color:#a8a6a4;">Paste</span>
<span class="t" style="left:15.60px;top:141.17px;font-size:11.6px;transform:scaleX(1.0188);color:#444341;">Clipboard</span>
<span class="t" style="left:108.80px;top:68.83px;font-size:12px;transform:scaleX(0.9838);color:#3d3c3b;">Calibri</span>
<span class="t" style="left:206.20px;top:68.83px;font-size:12px;color:#3d3c3b;">11</span>
<span class="t" style="left:154.30px;top:141.17px;font-size:11.6px;transform:scaleX(0.9801);color:#444341;">Font</span>
<span class="t" style="left:281.10px;top:141.17px;font-size:11.6px;transform:scaleX(1.0127);color:#444341;">Alignment</span>
<span class="t" style="left:391.70px;top:68.83px;font-size:12px;transform:scaleX(0.9280);color:#3d3c3b;">General</span>
<span class="t" style="left:401.50px;top:141.17px;font-size:11.6px;transform:scaleX(0.9910);color:#444341;">Number</span>
<span class="t" style="left:511.60px;top:67.63px;font-size:12px;transform:scaleX(1.0237);color:#3d3c3b;">Conditional Formatting</span>
<span class="t" style="left:511.60px;top:90.63px;font-size:12px;transform:scaleX(0.9472);color:#3d3c3b;">Format as Table</span>
<span class="t" style="left:511.60px;top:113.63px;font-size:12px;transform:scaleX(0.9156);color:#3d3c3b;">Cell Styles</span>
<span class="t" style="left:556.50px;top:141.17px;font-size:11.6px;letter-spacing:-0.110px;transform:scaleX(0.9000);color:#444341;">Styles</span>
<span class="t" style="left:690.85px;top:67.73px;font-size:12px;transform:scaleX(0.9468);color:#3d3c3b;">Insert</span>
<span class="t" style="left:691.60px;top:90.73px;font-size:12px;transform:scaleX(0.9282);color:#3d3c3b;">Delete</span>
<span class="t" style="left:691.60px;top:113.53px;font-size:12px;transform:scaleX(0.9516);color:#3d3c3b;">Format</span>
<span class="t" style="left:695.40px;top:141.17px;font-size:11.6px;letter-spacing:-0.049px;transform:scaleX(0.9000);color:#444341;">Cells</span>
<span class="t" style="left:781.70px;top:141.17px;font-size:11.6px;transform:scaleX(1.0314);color:#444341;">Editing</span>
<span class="t" style="left:13.20px;top:173.87px;font-size:12.5px;transform:scaleX(1.0171);color:#333;">A1</span>
<span class="t" style="left:261.88px;top:173.87px;font-size:12.5px;letter-spacing:0.409px;transform:scaleX(1.1200);color:#333;">Months</span>
<span class="t" style="left:114.50px;top:678.97px;font-size:12.2px;transform:scaleX(0.9653);color:#444;">Sheet1</span>
<span class="t" style="left:178.60px;top:678.97px;font-size:12.2px;transform:scaleX(0.9854);color:#217346;font-weight:bold;">Sheet2</span>
<span class="t" style="left:9.20px;top:704.43px;font-size:11.4px;transform:scaleX(0.9389);color:#444;">Ready</span>
<span class="t" style="left:55.20px;top:704.43px;font-size:11.4px;transform:scaleX(1.0219);color:#444;">Workbook Statistics</span>
<span class="t" style="left:196.50px;top:704.43px;font-size:11.4px;transform:scaleX(0.9869);color:#444;">Accessibility: Investigate</span>
<span class="t" style="left:836.50px;top:704.43px;font-size:11.4px;letter-spacing:-0.039px;transform:scaleX(0.9000);color:#444;">166%</span>
<span class="t" style="left:125.64px;top:212.27px;font-size:23.4px;transform:scaleX(0.8200);color:#217346;">A</span>
<span class="t" style="left:266.34px;top:212.27px;font-size:23.4px;transform:scaleX(0.8200);color:#262626;">B</span>
<span class="t" style="left:371.33px;top:212.27px;font-size:23.4px;transform:scaleX(0.8200);color:#262626;">C</span>
<span class="t" style="left:494.03px;top:212.27px;font-size:23.4px;transform:scaleX(0.8200);color:#262626;">D</span>
<span class="t" style="left:630.94px;top:212.27px;font-size:23.4px;transform:scaleX(0.8200);color:#262626;">E</span>
<span class="t" style="left:762.85px;top:212.27px;font-size:23.4px;transform:scaleX(0.8200);color:#262626;">F</span>
<span class="t" style="left:15.99px;top:244.33px;font-size:22.9px;transform:scaleX(0.9700);color:#217346;">1</span>
<span class="t" style="left:15.99px;top:277.33px;font-size:22.9px;transform:scaleX(0.9700);color:#333333;">2</span>
<span class="t" style="left:16.48px;top:310.33px;font-size:22.9px;transform:scaleX(0.9700);color:#333333;">3</span>
<span class="t" style="left:16.00px;top:343.33px;font-size:22.9px;transform:scaleX(0.9700);color:#333333;">4</span>
<span class="t" style="left:16.48px;top:376.33px;font-size:22.9px;transform:scaleX(0.9700);color:#333333;">5</span>
<span class="t" style="left:15.99px;top:409.33px;font-size:22.9px;transform:scaleX(0.9700);color:#333333;">6</span>
<span class="t" style="left:15.99px;top:442.33px;font-size:22.9px;transform:scaleX(0.9700);color:#333333;">7</span>
<span class="t" style="left:15.99px;top:475.33px;font-size:22.9px;transform:scaleX(0.9700);color:#333333;">8</span>
<span class="t" style="left:15.99px;top:508.33px;font-size:22.9px;transform:scaleX(0.9700);color:#333333;">9</span>
<span class="t" style="left:10.40px;top:541.33px;font-size:22.9px;letter-spacing:-1.200px;transform:scaleX(0.9700);color:#333333;">10</span>
<span class="t" style="left:11.23px;top:574.33px;font-size:22.9px;letter-spacing:-1.200px;transform:scaleX(0.9700);color:#333333;">11</span>
<span class="t" style="left:10.40px;top:607.33px;font-size:22.9px;letter-spacing:-1.200px;transform:scaleX(0.9700);color:#333333;">12</span>
<span class="t" style="left:10.40px;top:640.33px;font-size:22.9px;letter-spacing:-1.200px;transform:scaleX(0.9700);color:#333333;">13</span>
<span class="t" style="left:46.52px;top:245.09px;font-size:20.3px;transform:scaleX(1.0789);color:#000;font-weight:bold;">Months</span>
<span class="t" style="left:223.32px;top:245.09px;font-size:20.3px;transform:scaleX(0.9848);color:#000;font-weight:bold;">Earnings</span>
<span class="t" style="left:435.26px;top:245.12px;font-size:20.2px;transform:scaleX(0.9406);color:#000;font-weight:bold;">UPPERCASE</span>
<span class="t" style="left:573.77px;top:245.09px;font-size:20.3px;transform:scaleX(1.0319);color:#000;font-weight:bold;">lowercase</span>
<span class="t" style="left:708.19px;top:245.09px;font-size:20.3px;transform:scaleX(1.0109);color:#000;font-weight:bold;">Proper Case</span>
<span class="t" style="left:47.30px;top:279.02px;font-size:17.5px;transform:scaleX(0.9364);color:#000;">JANUARY</span>
<span class="t" style="left:261.80px;top:279.02px;font-size:17.5px;transform:scaleX(1.0195);color:#000;">$1, 000</span>
<span class="t" style="left:46.39px;top:312.02px;font-size:17.5px;transform:scaleX(0.9141);color:#000;">FEBRUARY</span>
<span class="t" style="left:276.60px;top:312.02px;font-size:17.5px;color:#000;">$900</span>
<span class="t" style="left:46.30px;top:345.02px;font-size:17.5px;transform:scaleX(0.9980);color:#000;">MARCH</span>
<span class="t" style="left:261.80px;top:345.02px;font-size:17.5px;transform:scaleX(1.0039);color:#000;">$1,200</span>
<span class="t" style="left:47.30px;top:378.02px;font-size:17.5px;transform:scaleX(0.9027);color:#000;">APRIL</span>
<span class="t" style="left:261.80px;top:378.02px;font-size:17.5px;transform:scaleX(1.0039);color:#000;">$1,400</span>
<span class="t" style="left:46.24px;top:411.02px;font-size:17.5px;transform:scaleX(1.0626);color:#000;">MAY</span>
<span class="t" style="left:261.80px;top:411.02px;font-size:17.5px;transform:scaleX(1.0039);color:#000;">$1,050</span>
<span class="t" style="left:47.30px;top:444.02px;font-size:17.5px;letter-spacing:-0.009px;transform:scaleX(0.9000);color:#000;">JUNE</span>
<span class="t" style="left:276.60px;top:444.02px;font-size:17.5px;color:#000;">$850</span>
<span class="t" style="left:47.30px;top:477.02px;font-size:17.5px;letter-spacing:-0.718px;transform:scaleX(0.9000);color:#000;">JULY</span>
<span class="t" style="left:261.80px;top:477.02px;font-size:17.5px;transform:scaleX(1.0039);color:#000;">$2,000</span>
<span class="t" style="left:47.30px;top:510.02px;font-size:17.5px;transform:scaleX(0.9326);color:#000;">AUGUST</span>
<span class="t" style="left:261.80px;top:510.02px;font-size:17.5px;transform:scaleX(1.0487);color:#000;">$2,011</span>
<span class="t" style="left:47.30px;top:543.02px;font-size:17.5px;transform:scaleX(0.9059);color:#000;">SEPTEMBER</span>
<span class="t" style="left:261.80px;top:543.02px;font-size:17.5px;transform:scaleX(1.0195);color:#000;">$1, 000</span>
<span class="t" style="left:47.30px;top:576.02px;font-size:17.5px;transform:scaleX(0.9138);color:#000;">OCTOBER</span>
<span class="t" style="left:261.80px;top:576.02px;font-size:17.5px;transform:scaleX(1.0039);color:#000;">$1,050</span>
<span class="t" style="left:46.33px;top:609.02px;font-size:17.5px;transform:scaleX(0.9663);color:#000;">NOVEMBER</span>
<span class="t" style="left:261.80px;top:609.02px;font-size:17.5px;transform:scaleX(1.0039);color:#000;">$5,000</span>
<span class="t" style="left:46.37px;top:642.02px;font-size:17.5px;transform:scaleX(0.9298);color:#000;">DECEMBER</span>
<span class="t" style="left:261.80px;top:642.02px;font-size:17.5px;transform:scaleX(1.0039);color:#000;">$1,400</span>
</div>
</body>
</html>
